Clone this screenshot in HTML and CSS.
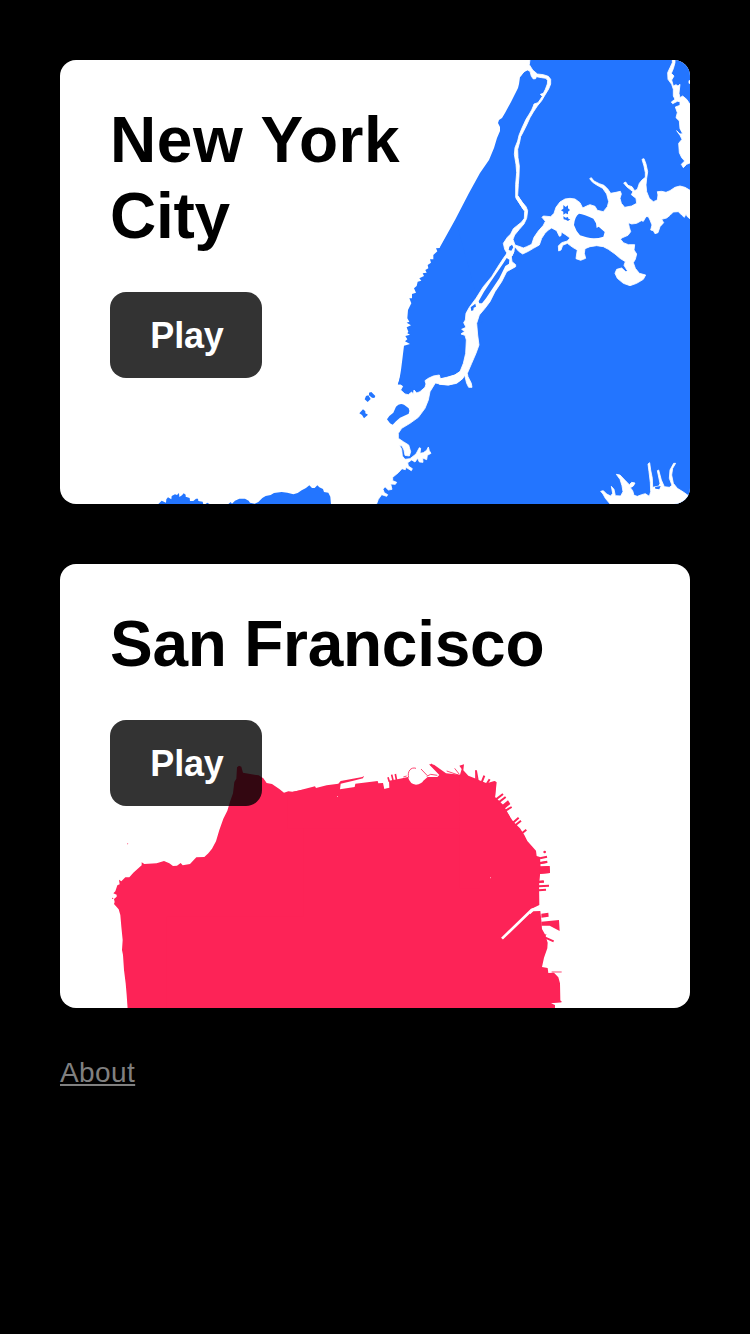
FILE: index.html
```html
<!DOCTYPE html>
<html lang="en">
<head>
<meta charset="utf-8">
<title>Cities</title>
<link rel="stylesheet" href="styles.css">
</head>
<body>
<main class="page">
  <section class="card">
    <svg class="map nyc" viewBox="60 60 630 444" aria-hidden="true">
      <!-- mainland and Manhattan -->
      <path d="M529 60H690V504H376L398 384L440 247L455 220L469 193L480 173L489 160L494 148L497 138L500 131L500 127L498 123L499 120L502 118L505 113L511 102L515 94L518 88L519 84L520 77L523 73L527 70L528 65Z"/>
      <g transform="translate(350 220) scale(.33333)">
        <path d="M317 0L300 32 285 58 270 84 258 85 262 94 250 105 250 118 240 118 243 128 233 135 235 145 226 150 230 158 218 160 222 168 208 175 214 182 203 185 200 198 192 205 198 218 186 222 186 235 178 235 184 250 178 262 174 270 172 295 178 305 170 308 183 316 170 322 175 335 172 340 180 344 166 348 172 358 165 364 180 372 162 377 158 410 153 450 148 480 144 493 200 510 400 300Z"/>
      </g>
      <!-- Harlem River -->
      <g class="water" transform="translate(480 56) scale(.33333)">
        <path d="M150 10L148 26 158 42 172 54 190 56 205 61 212 70 212 84 206 99 195 117 185 134 172 150 160 168 150 185 140 207 130 227 122 242 119 258 113 280 114 305 118 330 117 360 115 385 113 418 128 442 138 455 130 460 107 424 107 385 110 350 108 325 103 295 105 275 113 255 117 238 126 216 138 190 148 174 155 162 160 150 162 144 174 140 181 130 187 121 181 115 190 112 196 100 202 84 203 74 198 67 185 65 169 62 167 68 160 69 154 61 150 46 142 42 133 46 120 62 100 50 120 10Z"/>
        <path d="M577 10L577 20 570 35 563 50 564 70 575 85 580 100 580 120 585 130 574 138 578 143 592 136 600 137 600 148 586 153 592 170 588 185 598 195 600 218 608 233 600 234 590 224 600 238 606 250 596 262 598 290 605 305 614 315 604 325 610 335 620 325 632 320 632 148 620 130 608 120 600 125 597 112 600 85 594 90 588 86 580 90 575 72 582 60 574 52 580 38 585 20 585 10ZM627 74h5v8h-5Z"/>
      </g>
      <!-- East River and Flushing Bay -->
      <g class="water" transform="translate(480 150) scale(.33333)">
        <path d="M113 138L128 158 138 170 143 182 140 205 132 222 118 238 104 255 99 268 105 285 120 290 130 294 140 290 155 283 162 262 175 243 190 226 196 214 186 202 190 198 212 200 222 190 228 172 240 156 255 147 270 145 285 147 300 158 308 174 320 168 330 164 345 169 352 181 370 185 382 170 386 155 380 132 368 115 350 105 338 97 329 86 334 83 342 93 358 101 372 106 384 118 392 130 408 127 421 124 424 132 420 145 424 160 434 172 455 168 470 160 468 145 454 134 459 125 450 118 440 110 431 99 437 96 444 106 456 110 464 122 472 118 478 100 486 90 496 82 496 68 492 48 486 28 492 26 498 42 503 65 500 85 498 105 500 125 508 145 520 155 532 150 534 135 532 125 545 124 558 127 570 122 585 112 600 108 615 112 632 122V208L622 200 618 192 613 202 605 195 595 185 580 186 570 196 560 204 545 208 551 218 540 230 534 248 525 251 520 242 512 240 516 225 510 210 505 200 498 200 490 214 484 212 470 220 455 222 445 218 448 232 452 245 444 256 425 264 422 268 430 278 445 284 464 284 462 300 470 312 466 328 460 338 466 355 478 370 497 375 490 388 470 400 450 407 430 400 412 385 405 370 410 358 425 354 438 366 442 362 432 346 436 335 420 325 405 312 385 298 370 290 350 287 330 290 315 296 313 310 317 325 302 331 288 326 290 312 292 300 278 292 262 280 248 286 243 300 236 303 235 288 245 278 262 273 270 264 258 255 244 246 243 257 238 259 230 242 215 234 205 240 195 250 185 265 178 285 160 295 145 304 128 312 116 304 104 290 102 304 96 318 82 320 80 308 74 298 70 280 82 262 92 252 100 236 125 216 133 205 134 184 108 144Z"/>
        <path class="land" d="M282 225Q284 200 297 191Q312 192 340 206L348 220 350 234 356 230 374 246 370 260Q345 268 320 262L300 256 290 243ZM250 165L257 171 264 166 264 175 270 180 264 185 264 193 257 190 250 194 250 185 243 181 250 176ZM250 199L257 203 264 201 265 206 271 208 264 213 257 209 251 208ZM88 290L96 284 100 292 94 302 86 300Z"/>
      </g>
      <g class="water" transform="translate(350 220) scale(.33333)">
        <path d="M473 97L460 115 445 138 425 170 400 200 378 235 358 262 348 280 346 300 341 308 348 322 335 328 344 334 333 342 345 346 349 360 347 400 340 430 330 455 315 465 290 472 270 477 268 493 295 495 320 488 335 478 344 466 350 490 356 502 366 502 364 490 354 470 352 460 365 430 378 400 387 375 383 345 380 310 388 285 405 265 420 245 435 215 455 185 470 155 497 140 497 134 486 125 484 110 492 95Z"/>
        <path class="land" d="M470 114L478 119 477 131 466 138 448 175 428 205 408 235 396 250 388 250 386 244 402 215 422 185 442 156 460 130ZM362 262L376 251 378 260 371 263 370 271 364 273Z"/>
      </g>
      <!-- Upper Bay -->
      <g transform="translate(350 360) scale(.33333)">
        <path class="water" d="M140 75L152 75 158 79 152 90 165 102 175 104 185 96 190 103 192 90 200 99 210 95 225 82 228 72 225 62 235 55 250 48 268 45 271 56 290 54 315 45 330 35 345 40 338 56 320 70 295 75 270 72 256 69 240 95 235 120 225 145 205 172 180 190 155 205 145 220 145 235 160 245 176 255 182 275 178 288 165 286 162 270 156 258 148 255 155 268 157 288 165 298 180 296 198 282 208 263 212 265 210 280 220 278 230 271 235 261 238 272 243 280 232 286 230 299 218 294 219 307 208 306 203 295 195 306 185 300 173 308 175 318 187 326 184 332 168 322 166 329 156 326 145 338 128 352 128 362 140 367 136 373 122 372 126 388 115 390 105 380 99 388 103 398 113 404 110 409 95 404 85 418 79 434H20V75Z"/>
        <path d="M111 178L118 168 130 158 138 140Q148 128 162 134L176 145Q180 152 176 161L168 165 150 173 138 184 128 194 120 190ZM57 98L64 96 76 108 73 114 66 113 57 106ZM48 108L55 106 62 117 53 126 44 118ZM39 148L46 154 46 160 54 164 42 175 36 165 28 160Z"/>
      </g>
      <g transform="translate(150 470) scale(.33333)">
        <path d="M24 103L35 92 48 98 49 88 54 82 64 88 65 78 75 73 81 75 87 69 88 81 96 76 101 70 107 74 107 80 119 84 120 93 130 93 138 86 144 86 145 93 158 95 160 103ZM165 103L172 98 180 103ZM234 103L242 96 246 101 255 92 268 86 285 86 296 92 300 98 314 101 325 96 337 84 347 78 362 75 372 69 395 66 412 68 430 73 443 69 455 61 468 54 478 46 486 54 494 54 502 46 508 52 519 57 522 66 535 68 541 80 543 103Z"/>
      </g>
      <g class="water" transform="translate(590 450) scale(.33333)">
        <path d="M62 164L46 145 39 132 32 124 40 122 50 132 62 138 68 130 64 109 72 118 76 137 92 138 99 125 96 107 90 88 79 73 90 75 108 94 118 104 125 97 135 99 130 108 121 113 128 122 132 136 142 139 155 134 166 131 178 139 182 125 181 98 177 65 174 42 179 38 182 60 187 85 188 112 207 108 210 100 202 62 206 60 214 90 223 110 238 112 246 106 238 85 240 60 251 40 257 40 248 55 245 75 250 100 262 115 280 126 302 142V164Z"/>
        <path class="land" d="M195 111L212 108 208 118 196 116Z"/>
      </g>
    </svg>
    <div class="content">
      <h1 class="title"><span class="wide">New York</span><br>City</h1>
      <a class="play">Play</a>
    </div>
  </section>
  <section class="card">
    <svg class="map sf" viewBox="60 564 630 444" aria-hidden="true">
      <path d="M134 1010V910L230 840 288 800 420 785 490 790 530 850 530 1010Z"/>
      <!-- ocean side and Presidio -->
      <g transform="translate(100 750) scale(.33333)">
        <path d="M83 778L80 735 77 700 72 660 69 615 66 600 68 570 64 530 61 495 56 478 42 462 44 456 42 447 50 440 50 434 40 430 46 424 52 406 59 403 57 389 64 394 76 382 88 382 100 368 125 346 125 337 133 342 170 340 192 333 208 340 219 348 231 347 242 339 248 346 270 342 289 322 313 321 325 310 336 296 348 274 358 240 370 206 382 182 390 155 399 130 403 96 409 86 411 52 417 47 424 50 429 68 455 73 476 76 490 85 500 99 516 102 538 117 552 128 565 124 577 125 610 119V500H200V778Z"/>
        <circle cx="38" cy="445" r="2"/><circle cx="83" cy="281" r="1.5"/>
      </g>
      <!-- northern waterfront -->
      <g transform="translate(290 755) scale(.33333)">
        <path d="M-8 115L20 108 75 94 78 99 110 91 145 86 152 78 217 66 222 62 219 70 190 77 152 86 150 103 194 96 196 86 263 78 265 85 279 84 283 102 298 98 297 77 330 71 354 66Q360 88 378 89Q395 86 400 77L413 66 442 66 448 60 417 28 432 29 468 55 510 59 515 42 508 32 522 28 520 46 535 62 560 72 556 46 561 47 566 75 590 85 613 78 618 82 615 126 640 150 660 185V220H-8Z"/>
        <path class="line" d="M340 66L350 63M356 68C351 49 363 35 378 40M393 42L412 62M410 64L422 58 442 61M470 48L505 60M494 40L508 58"/>
        <path class="line mid" d="M298 80L294 67M310 80L305 59M320 78L316 57M558 75L558 46"/>
        <path class="line thick" d="M422 28L460 60M575 82L583 62M590 87L599 73"/>
      </g>
      <!-- Embarcadero piers -->
      <g transform="translate(440 755) scale(.33333)">
        <path d="M60 60L90 70 135 90 150 98 164 78 170 82 165 128 176 137 200 170 220 200 240 220 253 240 262 258 288 287 290 303 300 306 302 340 298 380 297 400H60Z"/>
        <path class="line pier" d="M168 133L189 117M175 143L197 126M193 169L215 156M218 204L236 188M224 212L243 197M243 237L259 224M300 310L321 305M300 325L321 321M297 380L311 379"/>
        <path d="M184 152L204 136 211 147 192 163ZM300 336L329 333 330 354 300 357Z"/>
        <circle cx="314" cy="291" r="4"/>
      </g>
      <!-- Mission Bay and the southern piers -->
      <g transform="translate(480 860) scale(.33333)">
        <path d="M0 0H180L179 20 177 65 178 135 155 146 66 233 68 238 160 154 181 153 184 180 186 207 196 225 203 248 202 265 192 293 186 321 203 324 205 339 222 338 235 352 240 370 241 420 244 427 213 430 225 435 225 448H0Z"/>
        <path d="M180 19L208 18 210 39 180 41ZM184 161L205 158 206 170 184 173ZM184 185L237 180 239 213 209 197 184 197Z"/>
        <path class="line pier" d="M179 9L202 5M176 66L192 65M176 79L207 77M176 91L198 89M196 233L221 244"/>
        <path class="line" d="M215 336L245 336M213 426L245 425M195 230L198 222"/>
        <path class="cut" d="M66 236L155 150 180 143"/>
      </g>
      <path class="cut speck" d="M337 796.5h1M490 878l1-.6"/>
    </svg>
    <div class="content">
      <h1 class="title">San Francisco</h1>
      <a class="play">Play</a>
    </div>
  </section>
  <a class="about" href="#">About</a>
</main>
</body>
</html>
```

FILE: styles.css
```css
* { box-sizing: border-box; }
body {
  margin: 0;
  min-height: 1334px;
  background: #000;
  font-family: "Liberation Sans", Arial, sans-serif;
}
.page {
  display: flex;
  flex-direction: column;
  align-items: flex-start;
  padding: 60px;
}
.card {
  display: grid;
  width: 630px;
  height: 444px;
  margin-bottom: 60px;
  border-radius: 16px;
  background: #fff;
  overflow: hidden;
}
.map {
  grid-area: 1 / 1;
  width: 630px;
  height: 444px;
}
.nyc { fill: #2375ff; }
.sf { fill: #fd2357; }
.water { fill: #fff; stroke: #fff; stroke-width: 2.5; stroke-linejoin: round; }
.land { fill: #2375ff; stroke: none; }
.line { fill: none; stroke: #fd2357; stroke-width: 2.5; }
.mid { stroke-width: 5; }
.thick { stroke-width: 6; }
.pier { stroke-width: 6; }
.cut { fill: none; stroke: #fff; stroke-width: 8; }
.speck { stroke-width: .6; }
.content {
  grid-area: 1 / 1;
  z-index: 1;
  display: flex;
  flex-direction: column;
  align-items: flex-start;
  padding: 42px 50px 50px;
}
.title {
  margin: 0 0 38px;
  font-size: 64px;
  line-height: 76px;
  font-weight: 700;
  letter-spacing: -.25px;
  color: #000;
}
.wide { letter-spacing: .55px; }
.play {
  display: flex;
  align-items: center;
  justify-content: center;
  width: 152px;
  height: 86px;
  padding: 2px 0 0 2px;
  border-radius: 16px;
  background: rgba(0, 0, 0, .8);
  color: #fff;
  font-size: 36px;
  font-weight: 700;
  letter-spacing: -.2px;
}
.about {
  margin-top: -12px;
  color: #808080;
  font-size: 28px;
  line-height: 34px;
  letter-spacing: .4px;
  text-decoration: underline;
}
```
